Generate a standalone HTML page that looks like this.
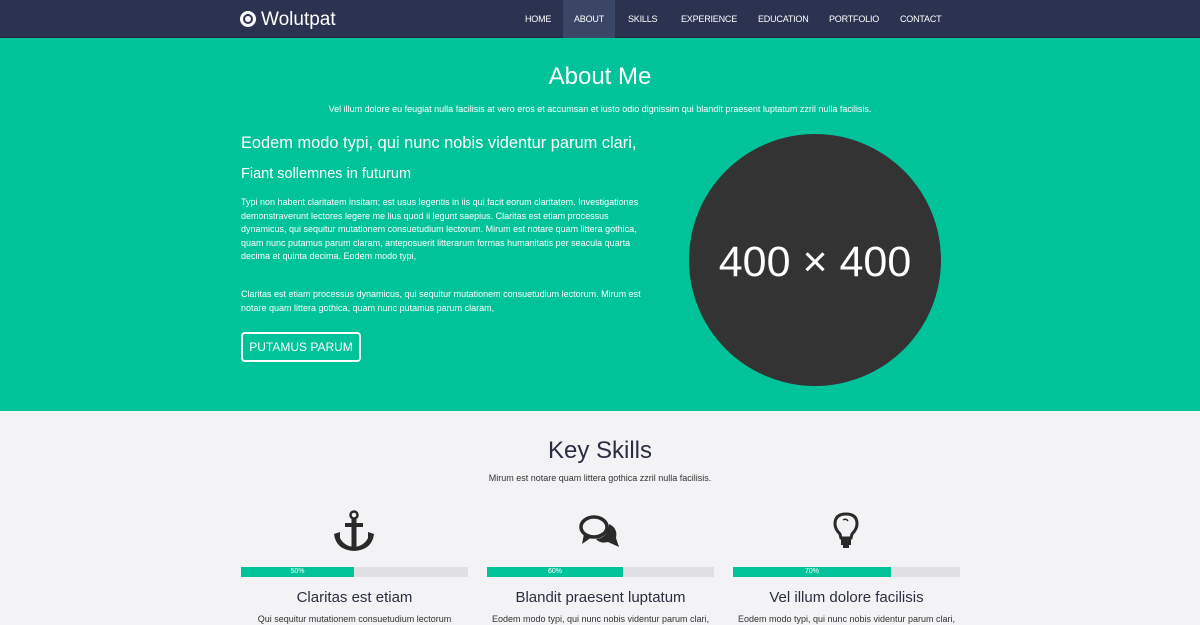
<!DOCTYPE html>
<html><head><style>
*{margin:0;padding:0;box-sizing:border-box}
body{width:1200px;height:625px;overflow:hidden;font-family:"Liberation Sans",sans-serif;background:#f3f3f5;position:relative}
.nav{position:absolute;left:0;top:0;width:1200px;height:38px;background:#2c3350;border-bottom:1px solid #1c2238}
.logo{position:absolute;left:240px;top:9px;color:#fff;font-size:19px;line-height:22px}
.logo i{display:inline-block;width:16px;height:16px;border:3px solid #fff;border-radius:50%;vertical-align:-2px;margin-right:5px;position:relative}
.logo i:after{content:"";position:absolute;left:2px;top:2px;width:6px;height:6px;background:#fff;border-radius:50%}
.menu a{position:absolute;top:0;height:38px;line-height:39px;color:#fff;font-size:9px;text-decoration:none;letter-spacing:-0.2px}
.act{background:#3b4565}
.hero{position:absolute;top:38px;left:0;width:1200px;height:373px;background:#00c39a;color:#fff}
.c{position:absolute;text-align:center;width:1200px;left:0}
p.b{font-size:9px;line-height:13.5px;position:absolute;left:241px;width:410px}
.bar{position:absolute;top:567px;height:10px;width:227px;background:#e0e0e2}
.bar div{height:10px;background:#00c39a;color:#fff;font-size:7px;text-align:center;line-height:10px}
.t{position:absolute;width:227px;text-align:center;color:#2a2d40;white-space:nowrap}
</style></head><body>
<div class="nav">
<div class="logo"><i></i>Wolutpat</div>
<div class="menu">
<a style="left:525px">HOME</a>
<a class="act" style="left:563px;width:52px;text-align:center">ABOUT</a>
<a style="left:628px">SKILLS</a>
<a style="left:681px">EXPERIENCE</a>
<a style="left:758px">EDUCATION</a>
<a style="left:829px">PORTFOLIO</a>
<a style="left:900px">CONTACT</a>
</div></div>
<div class="hero">
<div class="c" style="top:25px;font-size:24px">About Me</div>
<div class="c" style="top:66px;font-size:9px">Vel illum dolore eu feugiat nulla facilisis at vero eros et accumsan et iusto odio dignissim qui blandit praesent luptatum zzril nulla facilisis.</div>
<div style="position:absolute;left:241px;top:96px;font-size:16.4px">Eodem modo typi, qui nunc nobis videntur parum clari,</div>
<div style="position:absolute;left:241px;top:128px;font-size:14.5px">Fiant sollemnes in futurum</div>
<p class="b" style="top:158px">Typi non habent claritatem insitam; est usus legentis in iis qui facit eorum claritatem. Investigationes demonstraverunt lectores legere me lius quod ii legunt saepius. Claritas est etiam processus dynamicus, qui sequitur mutationem consuetudium lectorum. Mirum est notare quam littera gothica, quam nunc putamus parum claram, anteposuerit litterarum formas humanitatis per seacula quarta decima et quinta decima. Eodem modo typi,</p>
<p class="b" style="top:250px">Claritas est etiam processus dynamicus, qui sequitur mutationem consuetudium lectorum. Mirum est notare quam littera gothica, quam nunc putamus parum claram,</p>
<div style="position:absolute;left:241px;top:294px;width:120px;height:30px;border:2px solid #fff;border-radius:4px;font-size:12px;line-height:26px;text-align:center">PUTAMUS PARUM</div>
<div style="position:absolute;left:689px;top:96px;width:252px;height:252px;border-radius:50%;background:#333;color:#fff;font-size:43px;line-height:256px;text-align:center">400 × 400</div>
</div>
<div class="c" style="top:437px;font-size:24px;color:#2a2d40">Key Skills</div>
<div class="c" style="top:473px;font-size:9px;color:#333">Mirum est notare quam littera gothica zzril nulla facilisis.</div>
<svg style="position:absolute;left:332px;top:510px" width="44" height="42" viewBox="0 0 44 42"><circle cx="22" cy="5" r="3.5" fill="none" stroke="#2a2a2a" stroke-width="2.5"/><rect x="19.5" y="8" width="5" height="32" fill="#2a2a2a"/><rect x="13" y="13" width="18" height="4" fill="#2a2a2a"/><path d="M2 24 L8 22 L8 28 Q12 36 22 37 Q32 36 36 28 L36 22 L42 24 Q40 40 22 41 Q4 40 2 24Z" fill="#2a2a2a"/></svg>
<svg style="position:absolute;left:578px;top:514px" width="44" height="36" viewBox="0 0 44 36"><ellipse cx="16" cy="13" rx="13" ry="10" fill="none" stroke="#2a2a2a" stroke-width="3.5"/><path d="M6 20 L4 30 L14 23Z" fill="#2a2a2a"/><path d="M31 10 Q40 14 38 24 L41 33 L30 28 Q22 30 18 25 Q30 24 31 10Z" fill="#2a2a2a"/></svg>
<svg style="position:absolute;left:833px;top:512px" width="26" height="38" viewBox="0 0 26 38"><path d="M13 2 Q24 2 24 12 Q24 17 19 22 L18 26 L8 26 L7 22 Q2 17 2 12 Q2 2 13 2Z" fill="none" stroke="#2a2a2a" stroke-width="3"/><rect x="8" y="26" width="10" height="7" fill="#2a2a2a"/><rect x="10" y="33" width="6" height="3" fill="#2a2a2a"/><path d="M10 8 Q13 6 15 9" stroke="#2a2a2a" fill="none" stroke-width="1.5"/></svg>
<div class="bar" style="left:241px"><div style="width:113px">50%</div></div>
<div class="bar" style="left:487px"><div style="width:136px">60%</div></div>
<div class="bar" style="left:733px"><div style="width:158px">70%</div></div>
<div class="t" style="left:241px;top:589px;font-size:15px">Claritas est etiam</div>
<div class="t" style="left:487px;top:589px;font-size:15px">Blandit praesent luptatum</div>
<div class="t" style="left:733px;top:589px;font-size:15px">Vel illum dolore facilisis</div>
<div class="t" style="left:241px;top:614px;font-size:9px;color:#333">Qui sequitur mutationem consuetudium lectorum</div>
<div class="t" style="left:487px;top:614px;font-size:9px;color:#333">Eodem modo typi, qui nunc nobis videntur parum clari,</div>
<div class="t" style="left:733px;top:614px;font-size:9px;color:#333">Eodem modo typi, qui nunc nobis videntur parum clari,</div>
</body></html>
